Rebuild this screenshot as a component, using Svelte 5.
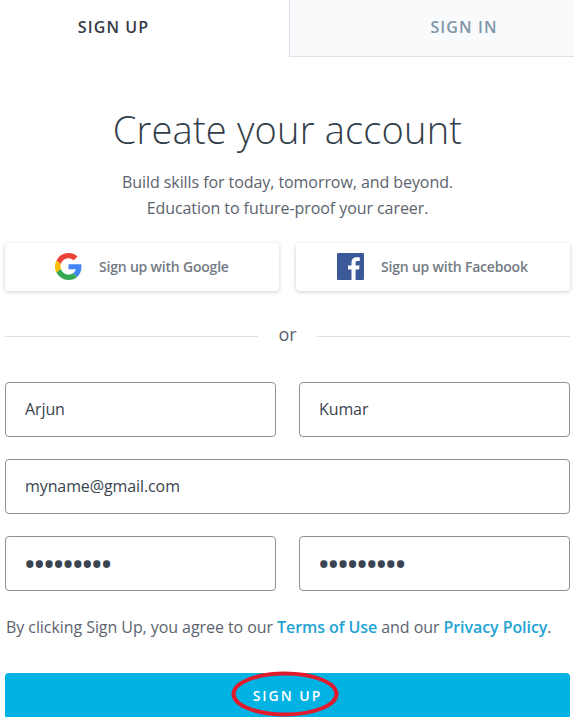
<script>
  let first = 'Arjun';
  let last = 'Kumar';
  let email = 'myname@gmail.com';
  let password = 'secret123';
  let confirm = 'secret123';
</script>

<main class="page">
  <div class="tabs">
    <div class="tab active">SIGN UP</div>
    <div class="tab">SIGN IN</div>
  </div>

  <div class="form">
    <h1>Create your account</h1>
    <p class="lead">Build skills for today, tomorrow, and beyond.<br />Education to future-proof your career.</p>

    <div class="social">
      <button class="social-btn google">
        <svg width="27" height="27" viewBox="0 0 48 48">
          <path fill="#ea4335" d="M24 9.5c3.5 0 6.700 1.200 9.200 3.600l6.900-6.900C35.900 2.400 30.500 0 24 0 14.600 0 6.500 5.400 2.600 13.200l8 6.200C12.500 13.700 17.800 9.500 24 9.500z" />
          <path fill="#4285f4" d="M47 24.500c0-1.600-.1-3.100-.4-4.500H24v9h12.900c-.6 3-2.200 5.500-4.800 7.200l7.700 6C44.300 38 47 31.800 47 24.500z" />
          <path fill="#fbbc05" d="M10.600 28.600c-.5-1.400-.8-3-.8-4.600s.3-3.200.8-4.600l-8-6.200C.9 16.500 0 20.100 0 24s.9 7.500 2.600 10.800l8-6.200z" />
          <path fill="#34a853" d="M24 48c6.500 0 11.900-2.100 15.800-5.800l-7.700-6c-2.100 1.400-4.900 2.300-8.100 2.300-6.200 0-11.500-4.200-13.400-9.900l-8 6.200C6.500 42.600 14.600 48 24 48z" />
        </svg>
        <span>Sign up with Google</span>
      </button>
      <button class="social-btn facebook">
        <svg width="27" height="27" viewBox="0 0 27 27">
          <rect width="27" height="27" rx="1" fill="#3b5998" />
          <path fill="#fff" d="M18.600 27V16.600h3.500l.5-4h-4V10c0-1.200.3-2 2-2h2.200V4.400c-.4 0-1.700-.2-3.100-.2-3.100 0-5.200 1.900-5.200 5.300v3.100h-3.500v4h3.500V27z" />
        </svg>
        <span>Sign up with Facebook</span>
      </button>
    </div>

    <div class="divider"><span>or</span></div>

    <div class="row">
      <input type="text" bind:value={first} />
      <input type="text" bind:value={last} />
    </div>
    <div class="row single">
      <input type="email" bind:value={email} />
    </div>
    <div class="row">
      <input type="password" bind:value={password} />
      <input type="password" bind:value={confirm} />
    </div>

    <p class="terms">By clicking Sign Up, you agree to our <a href="#terms">Terms of Use</a> and our <a href="#privacy">Privacy Policy</a>.</p>

    <button class="submit">
      SIGN UP
      <svg class="circle" width="110" height="48" viewBox="0 0 110 48">
        <ellipse cx="55" cy="24" rx="51.500" ry="20.500" fill="none" stroke="#e01b2e" stroke-width="4" />
      </svg>
    </button>
  </div>
</main>

<style>
  :global(body) {
    margin: 0;
    background: #fff;
  }

  .page {
    width: 574px;
    height: 717px;
    overflow: hidden;
    font-family: "Open Sans", sans-serif;
    color: #3a4450;
  }

  .tabs {
    display: grid;
    grid-template-columns: 289px 285px;
    height: 57px;
  }

  .tab {
    display: flex;
    align-items: center;
    justify-content: center;
    padding: 0 0 3px 64px;
    box-sizing: border-box;
    font-size: 16px;
    font-weight: 600;
    letter-spacing: 1.1px;
    color: #8095a8;
    background: #f9fafc;
    border-left: 1px solid #dfe3e8;
    border-bottom: 1px solid #dfe3e8;
  }

  .tab.active {
    padding: 0 62px 3px 0;
    color: #333c47;
    background: #fff;
    border: 0;
  }

  .form {
    padding: 0 4px 0 5px;
  }

  h1 {
    margin: 46px 0 0;
    font-size: 38px;
    line-height: 52px;
    font-weight: 300;
    letter-spacing: 0.2px;
    text-align: center;
    color: #333e4b;
  }

  .lead {
    margin: 14px 0 0;
    font-size: 16px;
    line-height: 26px;
    letter-spacing: -0.07px;
    text-align: center;
    color: #5b636e;
  }

  .social {
    display: grid;
    grid-template-columns: 274px 274px;
    gap: 17px;
    margin-top: 22px;
  }

  .social-btn {
    display: flex;
    align-items: center;
    height: 48px;
    padding: 0 0 1px;
    border: 0;
    border-radius: 4px;
    background: #fff;
    box-shadow: 0 1px 4px rgba(0, 0, 0, 0.2);
    font-family: inherit;
    font-size: 14px;
    font-weight: 600;
    letter-spacing: -0.2px;
    color: #737a84;
  }

  .google {
    padding-left: 50px;
    gap: 17px;
  }

  .facebook {
    padding-left: 41px;
    gap: 17px;
  }

  .divider {
    display: flex;
    align-items: center;
    margin-top: 29px;
    height: 32px;
    font-size: 18px;
    color: #5b636e;
  }

  .divider::before,
  .divider::after {
    content: "";
    flex: 1;
    height: 1px;
    background: #dcdfe3;
  }

  .divider span {
    width: 59px;
    text-align: center;
    position: relative;
    top: -2px;
  }

  .row {
    display: grid;
    grid-template-columns: 271px 271px;
    gap: 23px;
    margin-top: 22px;
  }

  .divider + .row {
    margin-top: 30px;
  }

  .row.single {
    grid-template-columns: 565px;
  }

  input {
    box-sizing: border-box;
    width: 100%;
    height: 55px;
    padding: 0 18px 2px 19px;
    border: 1px solid #8d9198;
    border-radius: 4px;
    background: #fff;
    font-family: inherit;
    font-size: 16px;
    letter-spacing: -0.1px;
    color: #3a4450;
    outline: none;
  }

  input[type="password"] {
    font-size: 25.5px;
    font-weight: 700;
    letter-spacing: 0;
    padding-bottom: 2px;
  }

  .terms {
    margin: 25px 0 0 1px;
    font-size: 16px;
    line-height: 22px;
    letter-spacing: -0.07px;
    white-space: nowrap;
    color: #5b636e;
  }

  .terms a {
    color: #22a3d4;
    font-weight: 600;
    text-decoration: none;
  }

  .submit {
    position: relative;
    display: block;
    width: 565px;
    height: 46px;
    margin-top: 35px;
    padding: 0 0 2px;
    border: 0;
    border-radius: 4px;
    background: #00b3e3;
    font-family: inherit;
    font-size: 14px;
    font-weight: 600;
    letter-spacing: 2px;
    color: #fff;
  }

  .circle {
    position: absolute;
    left: 225px;
    top: -3px;
  }
</style>
